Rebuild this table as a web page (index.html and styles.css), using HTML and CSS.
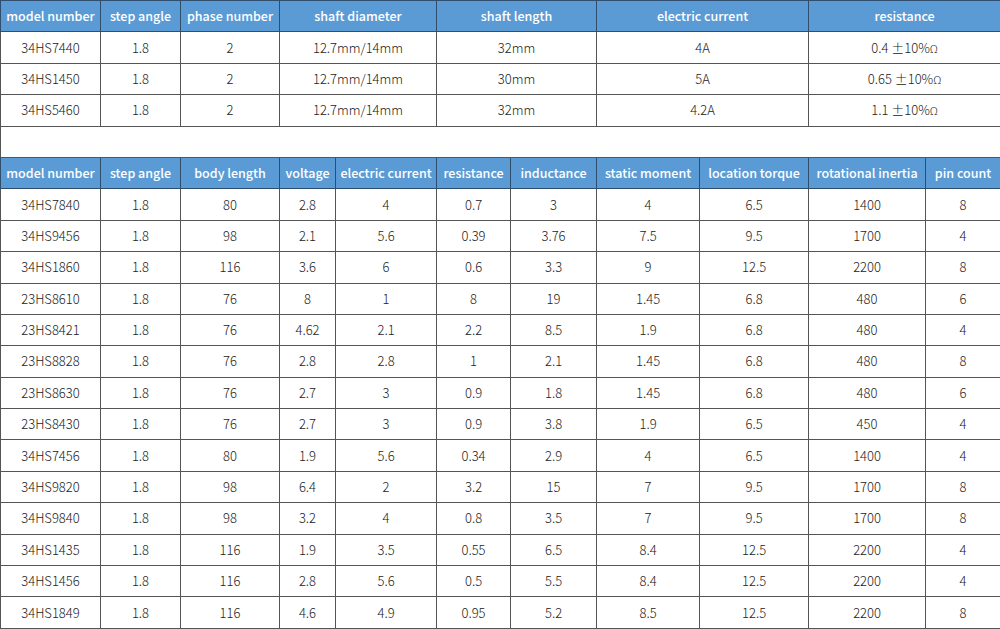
FILE: index.html
```html
<!DOCTYPE html>
<html>
<head>
<meta charset="utf-8">
<link rel="stylesheet" href="styles.css">
</head>
<body>
<table class="spec">
<colgroup>
<col style="width:100px"><col style="width:80px"><col style="width:99px"><col style="width:56px"><col style="width:101px"><col style="width:74px"><col style="width:86px"><col style="width:103px"><col style="width:109px"><col style="width:117px"><col style="width:75px">
</colgroup>
<tr class="head"><th>model number</th><th>step angle</th><th>phase number</th><th colspan="2">shaft diameter</th><th colspan="2">shaft length</th><th colspan="2">electric current</th><th colspan="2">resistance</th></tr>
<tr><td>34HS7440</td><td>1.8</td><td>2</td><td colspan="2">12.7mm/14mm</td><td colspan="2">32mm</td><td colspan="2">4A</td><td colspan="2">0.4 ±10%<span class="om">Ω</span></td></tr>
<tr><td>34HS1450</td><td>1.8</td><td>2</td><td colspan="2">12.7mm/14mm</td><td colspan="2">30mm</td><td colspan="2">5A</td><td colspan="2">0.65 ±10%<span class="om">Ω</span></td></tr>
<tr><td>34HS5460</td><td>1.8</td><td>2</td><td colspan="2">12.7mm/14mm</td><td colspan="2">32mm</td><td colspan="2">4.2A</td><td colspan="2">1.1 ±10%<span class="om">Ω</span></td></tr>
<tr class="gap"><td colspan="11"></td></tr>
<tr class="head"><th>model number</th><th>step angle</th><th>body length</th><th>voltage</th><th>electric current</th><th>resistance</th><th>inductance</th><th>static moment</th><th>location torque</th><th>rotational inertia</th><th>pin count</th></tr>
<tr><td>34HS7840</td><td>1.8</td><td>80</td><td>2.8</td><td>4</td><td>0.7</td><td>3</td><td>4</td><td>6.5</td><td>1400</td><td>8</td></tr>
<tr><td>34HS9456</td><td>1.8</td><td>98</td><td>2.1</td><td>5.6</td><td>0.39</td><td>3.76</td><td>7.5</td><td>9.5</td><td>1700</td><td>4</td></tr>
<tr><td>34HS1860</td><td>1.8</td><td>116</td><td>3.6</td><td>6</td><td>0.6</td><td>3.3</td><td>9</td><td>12.5</td><td>2200</td><td>8</td></tr>
<tr><td>23HS8610</td><td>1.8</td><td>76</td><td>8</td><td>1</td><td>8</td><td>19</td><td>1.45</td><td>6.8</td><td>480</td><td>6</td></tr>
<tr><td>23HS8421</td><td>1.8</td><td>76</td><td>4.62</td><td>2.1</td><td>2.2</td><td>8.5</td><td>1.9</td><td>6.8</td><td>480</td><td>4</td></tr>
<tr><td>23HS8828</td><td>1.8</td><td>76</td><td>2.8</td><td>2.8</td><td>1</td><td>2.1</td><td>1.45</td><td>6.8</td><td>480</td><td>8</td></tr>
<tr><td>23HS8630</td><td>1.8</td><td>76</td><td>2.7</td><td>3</td><td>0.9</td><td>1.8</td><td>1.45</td><td>6.8</td><td>480</td><td>6</td></tr>
<tr><td>23HS8430</td><td>1.8</td><td>76</td><td>2.7</td><td>3</td><td>0.9</td><td>3.8</td><td>1.9</td><td>6.5</td><td>450</td><td>4</td></tr>
<tr><td>34HS7456</td><td>1.8</td><td>80</td><td>1.9</td><td>5.6</td><td>0.34</td><td>2.9</td><td>4</td><td>6.5</td><td>1400</td><td>4</td></tr>
<tr><td>34HS9820</td><td>1.8</td><td>98</td><td>6.4</td><td>2</td><td>3.2</td><td>15</td><td>7</td><td>9.5</td><td>1700</td><td>8</td></tr>
<tr><td>34HS9840</td><td>1.8</td><td>98</td><td>3.2</td><td>4</td><td>0.8</td><td>3.5</td><td>7</td><td>9.5</td><td>1700</td><td>8</td></tr>
<tr><td>34HS1435</td><td>1.8</td><td>116</td><td>1.9</td><td>3.5</td><td>0.55</td><td>6.5</td><td>8.4</td><td>12.5</td><td>2200</td><td>4</td></tr>
<tr><td>34HS1456</td><td>1.8</td><td>116</td><td>2.8</td><td>5.6</td><td>0.5</td><td>5.5</td><td>8.4</td><td>12.5</td><td>2200</td><td>4</td></tr>
<tr><td>34HS1849</td><td>1.8</td><td>116</td><td>4.6</td><td>4.9</td><td>0.95</td><td>5.2</td><td>8.5</td><td>12.5</td><td>2200</td><td>8</td></tr>
</table>
</body>
</html>
```
FILE: styles.css
```css
html, body {
  margin: 0;
  padding: 0;
  background: #ffffff;
}
body {
  font-family: "Noto Sans CJK SC", "Noto Sans", sans-serif;
  color: #333333;
}
.spec {
  width: 1000px;
  height: 629px;
  table-layout: fixed;
  border-collapse: collapse;
}
.spec td, .spec th {
  border: 1px solid #555555;
  text-align: center;
  vertical-align: middle;
  padding: 0;
  height: 28px;
  font-size: 13px;
  line-height: 16px;
  white-space: nowrap;
  overflow: hidden;
}
.spec td {
  font-weight: 300;
  color: #222222;
}
.spec th {
  background: #5b9bd5;
  color: #ffffff;
  font-weight: 500;
  font-size: 12.5px;
  border-color: #2f4d6c;
}
.spec .gap td {
  border-left: 1px solid #555555;
  border-right: 1px solid #555555;
}
.om {
  font-size: 11px;
}
```
